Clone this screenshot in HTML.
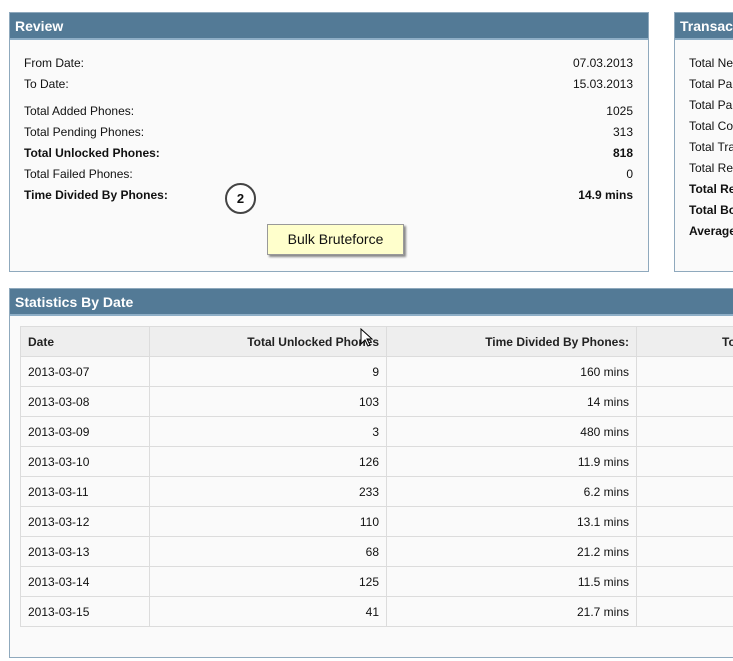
<!DOCTYPE html>
<html><head><style>
*{margin:0;padding:0;box-sizing:border-box}
body{width:733px;height:661px;background:#fff;font-family:"Liberation Sans",Arial,sans-serif;font-size:12px;color:#111;position:relative;overflow:hidden}
.panel{position:absolute;background:#fafafa;border:1px solid #8fa9bd}
.hd{position:absolute;left:0;right:0;top:0;height:27px;background:#537a96;border-bottom:2px solid #8eaec6;color:#fff;font-weight:bold;font-size:14px;padding:5px 0 0 5px;white-space:nowrap}
.r{position:absolute;left:14px;right:15px;height:16px;line-height:16px;white-space:nowrap}
.r span{float:right}
.b{font-weight:bold}
table{position:absolute;left:10px;top:37px;border-collapse:collapse;width:780px}
td,th{border:1px solid #dcdcdc;height:30px;padding:0 7px;font-size:12px;font-weight:normal;text-align:right}
th{background:#eee;font-weight:bold;color:#222}
td:first-child,th:first-child{text-align:left}
</style></head><body>
<div class="panel" style="left:9px;top:12px;width:640px;height:260px">
<div class="hd">Review</div>
<div class="r" style="top:42px">From Date:<span>07.03.2013</span></div>
<div class="r" style="top:63px">To Date:<span>15.03.2013</span></div>
<div class="r" style="top:90px">Total Added Phones:<span>1025</span></div>
<div class="r" style="top:111px">Total Pending Phones:<span>313</span></div>
<div class="r b" style="top:132px">Total Unlocked Phones:<span>818</span></div>
<div class="r" style="top:153px">Total Failed Phones:<span>0</span></div>
<div class="r b" style="top:174px">Time Divided By Phones:<span>14.9 mins</span></div>
<div style="position:absolute;left:215px;top:170px;width:31px;height:31px;border:2px solid #444;border-radius:50%;background:#fff;text-align:center;line-height:27px;font-weight:bold;font-size:13px">2</div>
<div style="position:absolute;left:257px;top:211px;width:137px;height:31px;background:#ffffcc;border:1px solid #999;box-shadow:2px 2px 2px #888;text-align:center;line-height:29px;font-size:14px">Bulk Bruteforce</div>
</div>
<div class="panel" style="left:674px;top:12px;width:200px;height:260px">
<div class="hd">Transactions</div>
<div class="r" style="top:42px">Total New</div>
<div class="r" style="top:63px">Total Paid</div>
<div class="r" style="top:84px">Total Paid</div>
<div class="r" style="top:105px">Total Comp</div>
<div class="r" style="top:126px">Total Trans</div>
<div class="r" style="top:147px">Total Ref</div>
<div class="r b" style="top:168px">Total Rev</div>
<div class="r b" style="top:189px">Total Bon</div>
<div class="r b" style="top:210px">Average</div>
</div>
<div class="panel" style="left:9px;top:288px;width:740px;height:370px">
<div class="hd">Statistics By Date</div>
<table>
<tr><th style="width:129px">Date</th><th style="width:237px">Total Unlocked Phones</th><th style="width:250px">Time Divided By Phones:</th><th style="text-align:left;padding-left:85px">Total</th></tr>
<tr><td>2013-03-07</td><td>9</td><td>160 mins</td><td></td></tr>
<tr><td>2013-03-08</td><td>103</td><td>14 mins</td><td></td></tr>
<tr><td>2013-03-09</td><td>3</td><td>480 mins</td><td></td></tr>
<tr><td>2013-03-10</td><td>126</td><td>11.9 mins</td><td></td></tr>
<tr><td>2013-03-11</td><td>233</td><td>6.2 mins</td><td></td></tr>
<tr><td>2013-03-12</td><td>110</td><td>13.1 mins</td><td></td></tr>
<tr><td>2013-03-13</td><td>68</td><td>21.2 mins</td><td></td></tr>
<tr><td>2013-03-14</td><td>125</td><td>11.5 mins</td><td></td></tr>
<tr><td>2013-03-15</td><td>41</td><td>21.7 mins</td><td></td></tr>
</table>
</div>
<svg style="position:absolute;left:360px;top:328px" width="14" height="20" viewBox="0 0 14 20"><path d="M1 1 L1 16 L5 12 L8 18 L10 17 L7 11 L12 11 Z" fill="#fff" stroke="#000" stroke-width="1"/></svg>
</body></html>
